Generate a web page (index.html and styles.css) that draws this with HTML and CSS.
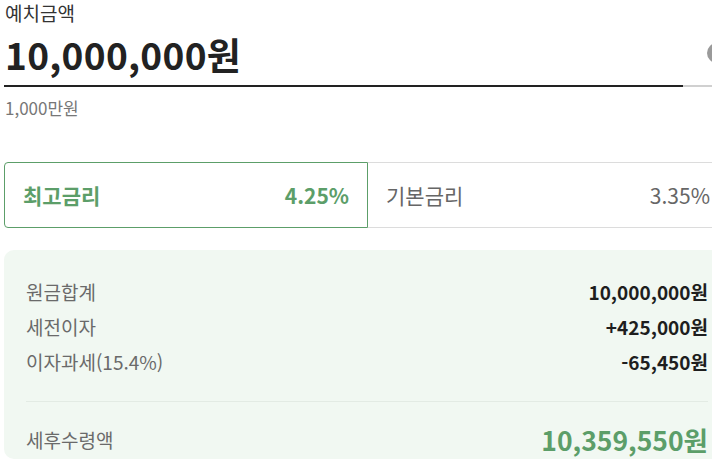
FILE: index.html
```html
<!DOCTYPE html>
<html lang="ko">
<head>
    <meta charset="UTF-8">
    <meta name="viewport" content="width=device-width, initial-scale=1.0">
    <title>예금 계산기</title>
    <link rel="stylesheet" href="styles.css">
</head>
<body>
    <div class="calc">
        <div class="field-label">예치금액</div>
        <div class="amount-row">
            <span class="amount-value">10,000,000원</span>
            <span class="clear-btn"></span>
        </div>
        <div class="amount-line">
            <div class="amount-line-fill" style="width: 93.3%;"></div>
        </div>
        <div class="amount-hint">1,000만원</div>

        <div class="rate-tabs">
            <div class="rate-tab active">
                <span>최고금리</span>
                <span>4.25%</span>
            </div>
            <div class="rate-tab">
                <span>기본금리</span>
                <span>3.35%</span>
            </div>
        </div>

        <div class="result-card">
            <div class="result-row">
                <span class="result-label">원금합계</span>
                <span class="result-value">10,000,000원</span>
            </div>
            <div class="result-row">
                <span class="result-label">세전이자</span>
                <span class="result-value">+425,000원</span>
            </div>
            <div class="result-row">
                <span class="result-label">이자과세(15.4%)</span>
                <span class="result-value">-65,450원</span>
            </div>
            <div class="result-divider"></div>
            <div class="result-row total">
                <span class="result-label">세후수령액</span>
                <span class="result-value">10,359,550원</span>
            </div>
        </div>
    </div>
</body>
</html>
```

FILE: styles.css
```css
body {
    margin: 0;
    background-color: #ffffff;
    font-family: "Noto Sans CJK KR", "Noto Sans", sans-serif;
    color: #222;
    overflow: hidden;
}
.calc {
    width: 728px;
    padding-left: 4px;
}
.field-label {
    font-size: 19px;
    line-height: 22px;
    padding-top: 2px;
    color: #333;
    padding-left: 1px;
}
.amount-row {
    display: flex;
    justify-content: space-between;
    align-items: center;
    margin-top: 6px;
    padding-bottom: 7px;
}
.amount-value {
    font-size: 37px;
    font-weight: 700;
    line-height: 48px;
    color: #222;
    padding-left: 1px;
    letter-spacing: 0.3px;
}
.clear-btn {
    width: 20px;
    height: 20px;
    border-radius: 50%;
    background-color: #9a9a9a;
    margin-right: 5px;
    margin-bottom: 2px;
}
.amount-line {
    height: 2px;
    background-color: #d0d0d0;
}
.amount-line-fill {
    height: 100%;
    background-color: #222;
}
.amount-hint {
    margin-top: 11px;
    padding-left: 1px;
    font-size: 17px;
    line-height: 20px;
    color: #777;
}
.rate-tabs {
    display: flex;
    margin-top: 44px;
}
.rate-tab {
    flex: none;
    width: 364px;
    display: flex;
    justify-content: space-between;
    align-items: center;
    height: 66px;
    box-sizing: border-box;
    padding: 0 22px 0 18px;
    border-top: 1px solid #dcdcdc;
    border-bottom: 1px solid #dcdcdc;
    font-size: 21px;
    color: #666;
}
.rate-tab.active {
    padding-right: 18px;
    border: 1px solid #5c9e69;
    border-radius: 4px 0 0 4px;
    color: #5c9e69;
    font-weight: 700;
}
.result-card {
    margin-top: 22px;
    background-color: #f1f8f2;
    border-radius: 10px;
    padding: 24px 24px 0 22px;
}
.result-row {
    display: flex;
    justify-content: space-between;
    align-items: center;
    height: 35px;
    font-size: 19px;
}
.result-label {
    color: #6a6a6a;
}
.result-value {
    font-weight: 700;
    color: #1e1e1e;
}
.result-divider {
    height: 1px;
    background-color: #e3ebe4;
    margin: 22px 0 17px;
}
.result-row.total {
    height: 40px;
}
.result-row.total .result-value {
    font-size: 26.5px;
    color: #5c9e69;
}
```
